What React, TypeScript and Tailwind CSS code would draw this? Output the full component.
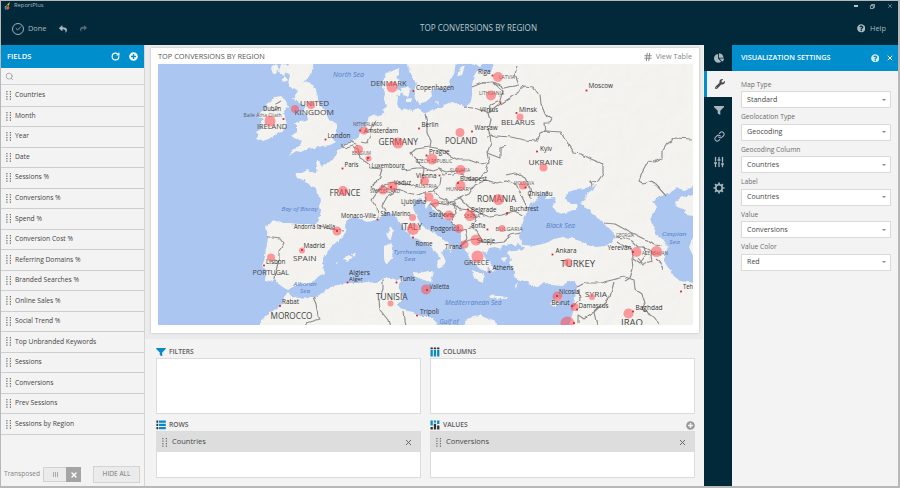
import React from "react";
import { FaReply, FaShare, FaPlusCircle, FaQuestionCircle, FaChartPie, FaWrench } from "react-icons/fa";
import { Check, Hash, Link, RotateCw, Search, SlidersVertical, X } from "lucide-react";

const fields = [
  "Countries", "Month", "Year", "Date", "Sessions %", "Conversions %", "Spend %",
  "Conversion Cost %", "Referring Domains %", "Branded Searches %", "Online Sales %",
  "Social Trend %", "Top Unbranded Keywords", "Sessions", "Conversions", "Prev Sessions",
  "Sessions by Region",
];

const settings: [string, string][] = [
  ["Map Type", "Standard"],
  ["Geolocation Type", "Geocoding"],
  ["Geocoding Column", "Countries"],
  ["Label", "Countries"],
  ["Value", "Conversions"],
  ["Value Color", "Red"],
];

const land = [
  // Continental Europe and western Asia
  "494,63 493,70 488,74 483,70 477,71 474,76 472,85 472,97 470,104 466,107 461,105 452,102 446,104 442,108 435,109 430,111 425,114 421,111 417,108 412,111 408,110 405,108 401,111 398,107 397,103 398,99 396,95 398,90 396,87 400,84 401,80 397,79 399,73 398,68 393,71 386,73 384,78 383,87 385,93 384,100 387,105 383,110 385,113 379,116 373,115 369,117 367,122 366,126 362,128 360,134 358,138 352,141 347,143 343,148 337,150 336,156 332,160 325,164 321,166 319,161 316,161 317,168 316,173 310,172 307,170 302,173 295,173 297,178 304,180 310,185 316,188 317,194 321,200 319,207 321,212 318,223 312,225 307,224 298,224 290,223 281,223 273,220 270,224 265,226 266,232 268,238 266,248 265,257 262,267 267,270 265,280 270,281 275,279 280,285 287,290 293,287 300,284 310,284 315,280 319,276 325,273 323,267 323,258 328,251 333,245 340,239 346,233 345,226 347,220 354,217 360,219 367,222 373,221 380,218 385,212 393,214 399,221 405,230 412,237 418,239 423,242 428,244 432,248 437,253 440,258 437,264 438,269 442,267 446,262 444,257 441,252 446,248 451,252 453,248 447,242 440,238 436,234 430,231 424,227 420,223 416,215 413,208 414,201 420,198 424,203 426,209 429,204 433,209 439,214 447,219 453,224 458,229 461,235 461,243 464,248 467,253 471,261 476,265 480,269 487,272 488,266 496,272 491,264 485,258 482,251 487,253 489,248 495,247 500,249 504,245 511,244 520,247 524,250 513,251 507,252 512,260 509,264 514,270 514,276 520,281 527,281 531,285 538,287 544,282 552,285 561,286 567,282 575,281 577,287 575,298 573,312 569,326 694,326 694,62",
  // Great Britain and Ireland
  "290,62 314,62 311,75 303,83 309,82 316,89 317,98 321,106 325,111 329,120 337,124 337,132 332,138 336,142 330,145 323,146 314,148 307,149 301,152 296,151 289,156 293,150 298,147 303,141 296,139 291,136 297,132 297,126 294,123 301,121 308,120 307,115 302,112 306,106 299,103 293,98 298,91 292,89 288,82 290,76 285,72",
  "275,97 281,96 286,101 288,107 284,111 285,118 287,124 284,131 276,134 271,138 263,141 256,139 259,135 256,132 263,128 260,124 264,119 258,116 262,111 267,109 266,104 271,102",
  "281,63 288,67 284,75 288,80 282,82 284,76 279,72", "271,68 276,64 279,70 273,74",
  // Scandinavia and the Baltic islands
  "405,62 411,73 416,84 414,92 415,99 420,104 427,101 432,96 431,91 437,88 448,88 450,80 454,74 456,62",
  "401,89 408,86 411,91 408,97 403,95", "396,91 401,91 400,96 396,95", "406,99 412,98 411,102 406,102", "461,66 465,66 462,75 458,76", "436,101 439,102 438,105", "470,62 485,62 480,66 473,65",
  // North Africa
  "259,326 264,318 269,313 276,309 281,305 284,297 288,292 292,297 300,298 307,297 316,297 325,291 333,286 347,283 358,283 367,282 377,283 384,278 391,278 397,280 403,278 398,286 401,293 403,298 397,305 403,310 413,312 420,316 429,316 435,321 438,326",
  "464,326 467,319 473,316 480,315 486,318 493,320 499,326",
  // Mediterranean islands
  "391,227 393,230 391,240 388,239 386,233 390,231", "384,246 391,243 393,247 392,258 387,264 384,260", "413,272 420,273 428,271 434,271 431,282 424,280 414,276", "489,295 497,296 508,297 506,299 490,298", "550,304 554,299 563,297 560,302 556,306", "343,259 349,255 352,258 347,262", "336,263 338,262 337,265", "352,254 356,254 354,257", "472,270 479,273 484,273 483,283 478,281 474,277", "486,264 495,270 493,272", "501,258 506,257 505,262", "515,286 518,282 516,289",
];

const water = [
  "523,245 519,237 521,228 524,219 528,210 530,203 536,201 540,195 547,192 546,199 555,198 556,202 552,206 557,212 561,214 568,212 578,208 577,204 571,204 565,198 569,192 576,189 586,188 597,184 593,190 587,193 586,198 580,203 586,208 596,216 604,224 611,230 616,237 610,243 605,246 596,247 587,244 580,241 571,238 563,237 554,239 546,243 535,246",
  "694,187 684,190 677,188 671,192 661,196 653,201 657,207 653,213 650,220 654,227 656,234 663,239 668,247 664,254 664,261 669,269 674,276 680,281 694,283 694,258 689,247 694,235 694,216 686,215 684,209 677,207 675,202 682,197 694,195",
  "512,248 518,244 526,248 520,250",
];

const borders = [
  "341,144 347,148 353,146 358,149 360,158 366,161 370,168 382,169 379,179 371,187 375,192 384,187 390,190 396,188",
  "360,142 367,143 371,138 372,128 376,121", "345,144 351,142 358,145", "367,161 371,156",
  "425,114 427,122 427,133 431,141 430,147 416,149 411,153 416,160 424,168 433,171 439,169 446,172 455,170 465,176 471,180 480,178 486,171 489,162 487,153 491,143 490,136 488,129 491,120 489,113 477,109 465,107",
  "430,147 441,149 449,155 458,160 469,160 480,164 487,163",
  "404,170 416,168 424,168 423,175 421,183 409,186 396,182 388,183 381,187", "439,169 443,175 453,174 465,170",
  "396,188 393,194 387,197 382,206 385,212", "384,187 376,194 372,200 377,207 378,218", "396,188 408,193 418,195 425,192 434,191 440,185 441,177",
  "425,192 426,202", "434,191 440,198 450,202 460,198 469,194 475,185 486,180", "429,205 437,203 447,205 454,204 456,213 448,216 441,213 430,203",
  "456,213 451,222 458,228", "454,204 460,210 470,211 476,217 473,226 465,229 460,231", "460,198 469,207 481,214 490,217 502,215 514,211 523,215",
  "486,180 496,183 506,181 516,184 522,197 527,207", "506,175 515,173 525,178 530,188 531,199",
  "473,226 479,235 483,242 495,243 504,242 511,235 520,233", "461,246 467,241 475,239 483,242", "465,229 467,239 461,245",
  "487,153 500,158 500,148 506,146", "487,137 497,136 511,137 524,140 537,141 540,133 546,131 561,132 564,138 572,149 573,153 581,154 591,159 603,164 603,174 598,181 591,182 592,186",
  "472,87 482,83 493,83 502,91 500,101 491,105 489,113", "482,83 493,82 504,88 519,85 515,75 517,65", "489,113 499,105 510,98 520,91 524,86 533,87 540,96 541,104 545,114 552,118 549,123 544,123 545,132",
  "692,139 676,138 667,144 662,152 662,158 655,162 648,161 642,172 639,181 644,184 652,181 658,187 666,196",
  "604,223 615,224 628,231 640,237 648,241 654,245 662,246", "615,237 624,238 632,241 638,247 644,247 646,255 640,263 633,258 632,249 624,246 617,242", "632,258 633,269 630,278 625,281",
  "577,287 585,283 600,283 612,280 625,277 634,280 635,289 642,294 645,303 642,309 654,317 660,325", "614,282 610,297 594,312 584,319 578,315 578,324", "594,312 597,326", "573,306 580,300 579,290",
  "643,247 650,250 652,261 643,264 638,258", "656,259 661,263 663,270",
  "266,237 273,237 280,238 284,243 279,251 279,259 276,271 275,279", "318,225 330,229 344,231",
  "313,297 316,304 318,316 320,319 307,323 304,327", "383,280 383,290 379,300 380,310 388,320 390,327", "404,312 406,327",
  "273,111 278,108 276,104 281,101",
];

type Bubble = [number, number, number];
const bubbles: Bubble[] = [
  [270, 121, 5.5], [295, 109, 4], [311, 105, 4], [392, 87, 5.5], [498, 77, 5], [491, 95.5, 5],
  [364, 130.5, 4], [460, 132.5, 4.5], [398, 143, 5.5], [358.5, 149.5, 4.5], [368.5, 158.5, 3],
  [432, 159, 5.5], [460.5, 170, 5], [424.5, 181, 4.5], [460.5, 185.5, 5], [392.5, 186.5, 5],
  [383, 190, 4.5], [343, 191, 5], [520, 117, 3.5], [543.5, 167.5, 4], [523, 185.5, 4],
  [429, 197, 4.5], [435, 203, 4], [498.5, 199.5, 5.5], [470, 215.5, 5.5], [449, 215.5, 5],
  [459, 228.5, 4.5], [412.5, 217.5, 3.5], [413, 229, 6], [337, 231, 4.5], [502, 228.5, 3.5],
  [476, 240, 5.5], [464.5, 244.5, 4], [477.5, 256.5, 6], [271, 257.5, 4], [302, 250.5, 3],
  [426, 289.5, 5], [390.5, 303.5, 3], [568, 262.5, 4], [636.5, 252, 5], [656.5, 251.5, 5.5],
  [557.5, 296.5, 5], [592, 297, 3], [574.5, 307, 4], [628.5, 313.5, 5], [567.5, 323.5, 7],
];

const cities: [number, number][] = [
  [283.5, 119], [325.5, 139.5], [342.5, 168.5], [413.5, 91], [492.5, 75.5], [500.5, 103], [516.5, 113],
  [586.5, 90.5], [360, 130.5], [419, 128.5], [472, 131.5], [426.5, 155.5], [439.5, 175.5], [537, 151.5],
  [368, 158], [458, 183], [391, 187], [525.5, 187.5], [377.5, 219.5], [413, 237.5], [507, 213],
  [487.5, 229.5], [489.5, 272], [347.5, 282.5], [396.5, 282.5], [417, 315.5], [280, 306], [264, 265.5],
  [552.5, 254.5], [633, 252], [681, 291.5], [577, 309.5], [572, 306], [633, 311.5], [302, 250], [468, 209.5],
  [557, 296], [427, 290], [574, 323], [337, 231],
];

// text, left, baseline, width, font size, tone
type Tone = "country" | "small" | "city" | "sea";
const labels: [string, number, number, number, number, Tone][] = [
  ["UNITED", 300, 106.3, 29, 8, "country"], ["KINGDOM", 294.5, 115, 39.5, 8, "country"],
  ["IRELAND", 257, 128.5, 30, 7.7, "country"], ["DENMARK", 370.5, 86, 36, 7.7, "country"],
  ["GERMANY", 378.5, 144.5, 39.5, 8.2, "country"], ["POLAND", 445, 143.5, 32.5, 8.2, "country"],
  ["BELARUS", 501, 125, 34, 8, "country"], ["UKRAINE", 528.5, 165, 34.5, 8, "country"],
  ["FRANCE", 329.5, 195.5, 31, 8.2, "country"], ["ROMANIA", 477, 201.5, 39, 8.2, "country"],
  ["ITALY", 401, 229.5, 21, 8.2, "country"], ["SPAIN", 293, 260.5, 23.5, 8, "country"],
  ["PORTUGAL", 252.5, 275, 36.5, 7.2, "country"], ["MOROCCO", 270.5, 319, 42, 8.2, "country"],
  ["TUNISIA", 376, 299.5, 31.5, 8.2, "country"], ["GREECE", 464, 265, 25, 7.2, "country"],
  ["TURKEY", 560.5, 267, 34.5, 8.4, "country"], ["SYRIA", 585, 297, 22, 7.7, "country"],
  ["IRAQ", 621, 326, 22, 8.2, "country"],
  ["LATVIA", 499, 79, 16, 4.8, "small"], ["LITHUANIA", 479, 95, 25, 4.8, "small"],
  ["NETHERLANDS", 353, 125.5, 29, 4.5, "small"], ["BELGIUM", 352, 154.5, 19, 4.5, "small"],
  ["CZECH REPUBLIC", 415.5, 162.5, 37, 4.8, "small"], ["SLOVAKIA", 450, 171.5, 20, 4.6, "small"],
  ["AUSTRIA", 415, 187.5, 22, 5.2, "small"], ["HUNGARY", 446, 190.5, 26, 5.2, "small"],
  ["SWITZERLAND", 370, 193, 30, 4.4, "small"], ["MOLDOVA", 514, 184.5, 20, 4.5, "small"],
  ["CROATIA", 438, 204, 18, 4.2, "small"], ["SERBIA", 464, 218, 16, 4.5, "small"],
  ["BULGARIA", 495.5, 231, 27.5, 5.4, "small"], ["GEORGIA", 616, 237, 18, 4.5, "small"],
  ["AZERBAIJAN", 642, 254.5, 26, 4.5, "small"], ["Baile Átha Cliath", 243.5, 117, 38, 4.8, "small"],
  ["Dublin", 263, 111, 18, 6.6, "city"], ["London", 327.5, 138, 23, 6.7, "city"],
  ["Amsterdam", 364, 133, 34, 6.7, "city"], ["Copenhagen", 416, 89.5, 38, 6.7, "city"],
  ["Riga", 478, 74, 12.5, 6.6, "city"], ["Vilnius", 480, 112, 18, 6.6, "city"],
  ["Minsk", 519, 111.5, 18, 6.6, "city"], ["Moscow", 588.5, 88.3, 24.5, 6.7, "city"],
  ["Berlin", 421.5, 127, 17, 6.6, "city"], ["Warsaw", 474.5, 130, 23, 6.6, "city"],
  ["Prague", 429, 153.8, 20.5, 6.6, "city"], ["Vienna", 416, 178, 20.5, 6.6, "city"],
  ["Kyiv", 540, 150.5, 12, 6.6, "city"], ["Paris", 344.5, 167, 14, 6.6, "city"],
  ["Luxembourg", 371.5, 168, 33, 6.2, "city"], ["Vaduz", 394, 185, 17, 6.2, "city"],
  ["Budapest", 460, 180.5, 27, 6.6, "city"], ["Chișinău", 527.5, 195.5, 25, 6.6, "city"],
  ["Ljubljana", 401, 204, 25, 6.4, "city"], ["Monaco-Ville", 341, 218, 35, 6.4, "city"],
  ["San Marino", 380.5, 216, 30, 6.4, "city"], ["Sarajevo", 429, 217, 24, 6.4, "city"],
  ["Belgrade", 471, 212, 25.5, 6.6, "city"], ["Bucharest", 509.5, 211, 29, 6.6, "city"],
  ["Sofia", 471, 228, 14.5, 6.6, "city"], ["Podgorica", 430.5, 230.5, 29, 6.4, "city"],
  ["Skopje", 477, 243, 18, 6.2, "city"], ["Tirana", 445, 248.5, 17, 6.2, "city"],
  ["Rome", 415.5, 245.5, 17, 6.7, "city"], ["Andorra la Vella", 294, 229, 41, 6.2, "city"],
  ["Madrid", 303.5, 248, 21.5, 6.6, "city"], ["Lisbon", 266, 263.8, 19.5, 6.6, "city"],
  ["Rabat", 282, 303.5, 17, 6.6, "city"], ["Algiers", 349, 274.5, 21, 6.6, "city"],
  ["Alger", 349, 281, 14, 5.2, "city"], ["Tunis", 399.5, 281, 15.5, 6.6, "city"],
  ["Valletta", 429.5, 288.5, 19.5, 6.2, "city"], ["Tripoli", 420, 313.5, 19, 6.7, "city"],
  ["Athens", 492.5, 270, 21, 6.6, "city"], ["Ankara", 555.5, 252.5, 21, 6.6, "city"],
  ["Nicosia", 559, 294, 20, 6.6, "city"], ["Beirut", 551.5, 305, 18, 6.6, "city"],
  ["Damascus", 578.5, 307.5, 30, 6.6, "city"], ["Baghdad", 635.5, 309.5, 27, 6.6, "city"],
  ["Yerevan", 607.5, 250, 24, 6.6, "city"], ["Teh", 683, 289, 10, 6.6, "city"],
  ["North Sea", 333, 77, 31, 6.5, "sea"], ["Bay of Biscay", 281.5, 210.5, 36, 6, "sea"],
  ["Alboran", 293.5, 285.8, 23, 5.8, "sea"], ["Sea", 300, 293.3, 10, 5.6, "sea"],
  ["Tyrrhenian", 393.5, 253.6, 32.5, 6, "sea"], ["Sea", 404, 261.4, 11.5, 5.8, "sea"],
  ["Mediterranean Sea", 445, 304.5, 56.5, 6.5, "sea"], ["Gulf of", 439.5, 323.5, 19, 6.2, "sea"],
  ["Black Sea", 546, 227.5, 29, 6.5, "sea"], ["Caspian", 662, 235.8, 24.5, 6, "sea"],
  ["Sea", 669, 243.6, 11, 5.8, "sea"],
];

const toneClass: Record<Tone, string> = {
  country: "fill-[#454545] font-medium",
  small: "fill-[#5c5c5c] font-medium",
  city: "fill-[#303030]",
  sea: "fill-[#5580c4] italic",
};

function RegionMap() {
  return (
    <svg viewBox="158 64 535 261" className="block h-[261px] w-[535px] font-['Open_Sans','Noto_Sans',sans-serif]" preserveAspectRatio="none">
      <defs>
        <filter id="relief" x="0" y="0" width="1" height="1">
          <feTurbulence type="fractalNoise" baseFrequency="0.07" numOctaves="3" seed="6" result="n" />
          <feDiffuseLighting in="n" surfaceScale="1.1" lightingColor="#ffffff" result="l">
            <feDistantLight azimuth="225" elevation="62" />
          </feDiffuseLighting>
          <feComposite in="l" in2="SourceAlpha" operator="in" />
        </filter>
        <filter id="coast" x="-5%" y="-5%" width="110%" height="110%">
          <feTurbulence type="fractalNoise" baseFrequency="0.25" numOctaves="2" seed="3" />
          <feDisplacementMap in="SourceGraphic" scale="3.2" xChannelSelector="R" yChannelSelector="G" />
        </filter>
        <filter id="frontier" filterUnits="userSpaceOnUse" x="150" y="56" width="551" height="277">
          <feTurbulence type="fractalNoise" baseFrequency="0.16" numOctaves="1" seed="8" />
          <feDisplacementMap in="SourceGraphic" scale="4" xChannelSelector="R" yChannelSelector="G" />
        </filter>
      </defs>
      <rect x="158" y="64" width="535" height="261" fill="#abc6f1" />
      <g filter="url(#coast)">
        {land.map((p) => <polygon key={p} points={p} fill="#f4f3ef" />)}
      </g>
      <g filter="url(#coast)" opacity="0.1">
        {land.map((p) => <polygon key={p} points={p} filter="url(#relief)" />)}
      </g>
      <g filter="url(#coast)">
        {water.map((p) => <polygon key={p} points={p} fill="#abc6f1" />)}
      </g>
      <g filter="url(#frontier)">
        {borders.map((p) => <polyline key={p} points={p} fill="none" stroke="#8d8d8d" strokeWidth="1.15" strokeLinejoin="round" />)}
      </g>
      {labels.map(([t, x, y, w, s, tone], i) => (
        <text key={i} x={x} y={y} textLength={w} lengthAdjust="spacingAndGlyphs" fontSize={s} className={toneClass[tone]}>{t}</text>
      ))}
      {bubbles.map(([x, y, r], i) => <circle key={i} cx={x} cy={y} r={r} fill="#ff5058" fillOpacity="0.56" />)}
      {cities.map(([x, y], i) => <rect key={i} x={x - 0.9} y={y - 0.9} width="1.8" height="1.8" fill="#cf2a2a" />)}
    </svg>
  );
}

function Grip() {
  return (
    <svg viewBox="0 0 6 9" className="h-[9px] w-[6px] shrink-0" fill="#6d6d6d">
      {[0, 2.5, 5, 7.5].map((y) => (
        <React.Fragment key={y}>
          <rect x="0.3" y={y} width="1.2" height="1.3" />
          <rect x="3.8" y={y} width="1.2" height="1.3" />
        </React.Fragment>
      ))}
    </svg>
  );
}

function Funnel({ className }: { className: string }) {
  return (
    <svg viewBox="0 0 10 9" className={className} fill="currentColor">
      <path d="M0 0h10v1L6.3 4.8V9L3.7 7.5V4.8L0 1z" />
    </svg>
  );
}

function ZoneIcon({ kind }: { kind: string }) {
  if (kind === "FILTERS") return <Funnel className="h-[8.5px] w-[10px] text-[#078bc7]" />;
  if (kind === "COLUMNS")
    return (
      <svg viewBox="0 0 10 10" className="h-[10px] w-[10px]">
        <path d="M.5 .5h2.3v1.8H.5zM3.8 .5h2.3v1.8H3.8zM7.1 .5h2.3v1.8H7.1z" fill="#333" />
        <path d="M.5 3h2.3v6.5H.5zM3.8 3h2.3v6.5H3.8zM7.1 3h2.3v6.5H7.1z" fill="#078bc7" />
      </svg>
    );
  if (kind === "ROWS")
    return (
      <svg viewBox="0 0 10 10" className="h-[10px] w-[10px]">
        <path d="M.4 .5h1.8v2.2H.4zM.4 3.8h1.8V6H.4zM.4 7.1h1.8v2.2H.4z" fill="#333" />
        <path d="M3 .5h6.8v2.2H3zM3 3.8h6.8V6H3zM3 7.1h6.8v2.2H3z" fill="#078bc7" />
      </svg>
    );
  return (
    <svg viewBox="0 0 10 10" className="h-[10px] w-[10px]">
      <path d="M.5 .5h2.3v5H.5zM3.8 .5h2.3v2H3.8zM7.1 .5h2.3v3.5H7.1z" fill="#078bc7" />
      <path d="M.5 7h2.3v2.5H.5zM3.8 3.8h2.3v5.7H3.8zM7.1 5.5h2.3v4H7.1z" fill="#333" />
    </svg>
  );
}

function Zone({ title, item, add }: { title: string; item?: string; add?: boolean }) {
  return (
    <section className="min-w-0 flex-1">
      <div className="flex h-[13px] items-center gap-[3px] pt-px text-[6.7px] font-semibold text-[#5a5a5a]">
        <ZoneIcon kind={title} />
        <span>{title}</span>
        {add && <FaPlusCircle className="ml-auto h-[9px] w-[9px] text-[#999999]" />}
      </div>
      <div className={item ? "h-[47px] border border-[#dcdcdc] bg-white" : "h-[56px] border border-[#dcdcdc] bg-white"}>
        {item && (
          <div className="flex h-[20px] items-center gap-[4px] bg-[#dddddd] pl-[5px] pr-[7px] text-[7.5px] text-[#484848]">
            <Grip />
            <span>{item}</span>
            <X className="ml-auto h-[9px] w-[9px] text-[#666666]" strokeWidth={2.6} />
          </div>
        )}
      </div>
    </section>
  );
}

function Gear() {
  return (
    <svg viewBox="0 0 24 24" className="h-[12px] w-[12px]" fill="none" stroke="currentColor">
      <circle cx="12" cy="12" r="6.4" strokeWidth="3.2" />
      <path d="M12 1v4M12 19v4M1 12h4M19 12h4M4.2 4.2l2.9 2.9M16.9 16.9l2.9 2.9M4.2 19.8l2.9-2.9M16.9 7.1l2.9-2.9" strokeWidth="3.4" />
    </svg>
  );
}

export default function App() {
  return (
    <div className="flex h-[488px] w-[900px] flex-col overflow-hidden border border-b-2 border-r-2 border-[#b8b8b8] bg-[#f3f3f3] font-['Open_Sans','Noto_Sans',sans-serif] text-[7px] leading-none text-[#505050]">
      <header className="flex h-[44px] shrink-0 flex-col bg-[#02293a] text-[#a9b8bf]">
        <div className="flex h-[10px] items-center pl-[3px] pr-[5px]">
          <svg viewBox="0 0 8 9" className="h-[8px] w-[7px]">
            <path d="M3.2 3.3L6.8 0 5.5 4.3z" fill="#f5cb24" />
            <path d="M3.3 3 0.6 5.5 3 6z" fill="#66bc45" />
            <path d="M.5 5.8C.6 8 1.5 8.5 3 8.8L3.3 5.5z" fill="#1c9ada" />
            <path d="M3.4 5l2.2-.6C7 7 5.8 8.6 3.3 8.8z" fill="#ef5138" />
          </svg>
          <span className="ml-[3px] text-[5.8px]">ReportPlus</span>
          <div className="ml-auto flex items-center gap-[12px]">
            <span className="h-[1.5px] w-[4px] bg-[#b6c3c9]" />
            <svg viewBox="0 0 6 6" className="h-[5px] w-[5px]" fill="none" stroke="#b6c3c9" strokeWidth="1">
              <path d="M.5 2h3.5v3.5H.5zM2 2V.5h3.5V4H4" />
            </svg>
            <X className="h-[6px] w-[6px]" strokeWidth={2.5} />
          </div>
        </div>
        <div className="grid h-[34px] grid-cols-3 items-center pt-px">
          <div className="flex items-center pl-[11px]">
            <span className="flex h-[12px] w-[12px] items-center justify-center rounded-full border border-[#9eafb7]">
              <Check className="h-[7px] w-[7px]" strokeWidth={3} />
            </span>
            <span className="ml-[4px] text-[7.4px]">Done</span>
            <FaReply className="ml-[12px] h-[8px] w-[8px]" />
            <FaShare className="ml-[13px] h-[7px] w-[7px] text-[#4f6874]" />
          </div>
          <h1 className="translate-x-[29px] whitespace-nowrap text-center text-[8.1px] text-[#bcc7cc]">TOP CONVERSIONS BY REGION</h1>
          <div className="flex items-center justify-end gap-[5px] pr-[12px] text-[7.4px]">
            <FaQuestionCircle className="h-[8.5px] w-[8.5px]" />
            <span>Help</span>
          </div>
        </div>
      </header>

      <div className="flex min-h-0 flex-1">
        <aside className="flex w-[144px] shrink-0 flex-col border-r border-[#d5d5d5]">
          <div className="flex h-[23px] shrink-0 items-center bg-[#008ecd] pl-[6px] pr-[6px] text-white">
            <span className="text-[7.6px] font-semibold">FIELDS</span>
            <RotateCw className="ml-auto h-[9px] w-[9px]" strokeWidth={3} />
            <FaPlusCircle className="ml-[9px] h-[9px] w-[9px]" />
          </div>
          <div className="flex h-[17px] shrink-0 items-center border-b border-[#d3d3d3] pl-[4px]">
            <Search className="h-[9px] w-[9px] text-[#999999]" strokeWidth={2} />
          </div>
          <ul className="pt-px">
            {fields.map((f) => (
              <li key={f} className="flex h-[20.53px] items-center gap-[3px] border-b border-[#cecece] pl-[5px] text-[6.7px] text-[#444444]">
                <Grip />
                <span>{f}</span>
              </li>
            ))}
          </ul>
          <div className="mb-[3px] mt-auto flex items-center pl-[3px] pr-[4px]">
            <span className="text-[6.6px] text-[#858585]">Transposed</span>
            <div className="ml-[3px] flex h-[15px] w-[38px] border border-[#d2d2d2] bg-[#ebebeb]">
              <span className="flex flex-1 items-center justify-center gap-[1px]">
                <i className="h-[5px] w-px bg-[#aaaaaa]" /><i className="h-[5px] w-px bg-[#aaaaaa]" /><i className="h-[5px] w-px bg-[#aaaaaa]" />
              </span>
              <span className="-my-px -mr-px flex w-[15px] items-center justify-center bg-[#a4a4a4] text-white">
                <X className="h-[8px] w-[8px]" strokeWidth={4} />
              </span>
            </div>
            <button className="ml-auto h-[17px] w-[47px] border border-[#d4d4d4] bg-[#ebebeb] text-[6.6px] text-[#777777]">HIDE ALL</button>
          </div>
        </aside>

        <main className="flex w-[558px] shrink-0 flex-col">
          <div className="h-[294px] shrink-0 bg-[#ebebeb] pl-[6px] pt-[3px]">
            <div className="h-[285px] w-[548px] bg-white pl-[7px] shadow-[0_0_2px_rgba(0,0,0,0.25)]">
              <div className="flex h-[16px] items-center pr-[7px] pt-[2px] text-[7.4px] text-[#555555]">
                <span>TOP CONVERSIONS BY REGION</span>
                <Hash className="ml-auto h-[10px] w-[10px] text-[#777777]" strokeWidth={2} />
                <span className="ml-[3px] text-[7.3px] text-[#858585]">View Table</span>
              </div>
              <RegionMap />
            </div>
          </div>
          <div className="flex flex-col gap-[4px] pl-[11px] pr-[8px] pt-[6px]">
            <div className="flex gap-[9px]">
              <Zone title="FILTERS" />
              <Zone title="COLUMNS" />
            </div>
            <div className="flex gap-[9px]">
              <Zone title="ROWS" item="Countries" />
              <Zone title="VALUES" item="Conversions" add />
            </div>
          </div>
        </main>

        <nav className="ml-px flex w-[28px] shrink-0 flex-col bg-[#02293a] text-[#a9b7be]">
          <span className="flex h-[26px] items-center justify-center pl-[2px]"><FaChartPie className="h-[10px] w-[10px]" /></span>
          <span className="flex h-[26px] items-center justify-center border-l-[3px] border-[#008ecd] bg-[#f3f3f3] text-[#4c4c4c]"><FaWrench className="h-[10px] w-[10px]" /></span>
          <span className="flex h-[26px] items-center justify-center pl-[2px]"><Funnel className="h-[9px] w-[10px]" /></span>
          <span className="flex h-[26px] items-center justify-center pl-[2px]"><Link className="h-[11px] w-[11px]" strokeWidth={2.2} /></span>
          <span className="flex h-[26px] items-center justify-center pl-[2px]"><SlidersVertical className="h-[12px] w-[12px]" strokeWidth={2.6} /></span>
          <span className="flex h-[26px] items-center justify-center pl-[2px]"><Gear /></span>
        </nav>

        <aside className="min-w-0 flex-1">
          <div className="flex h-[26px] items-center bg-[#008ecd] pl-[9px] pr-[4px] text-white">
            <span className="text-[7.3px] font-semibold">VISUALIZATION SETTINGS</span>
            <FaQuestionCircle className="ml-auto h-[8.5px] w-[8.5px] text-[#d6edf7]" />
            <X className="ml-[7px] h-[8px] w-[8px]" strokeWidth={3} />
          </div>
          <div className="pl-[9px] pt-[8px]">
            {settings.map(([label, value]) => (
              <div key={label} className="h-[32.5px]">
                <div className="flex h-[12px] items-center text-[6.7px] text-[#6c6c6c]">{label}</div>
                <div className="flex h-[17px] w-[150px] items-center justify-between border border-[#dadada] bg-white pl-[5px] pr-[4px] text-[7.1px] text-[#484848]">
                  <span>{value}</span>
                  <i className="h-0 w-0 border-x-[2px] border-t-[2px] border-x-transparent border-t-[#888888]" />
                </div>
              </div>
            ))}
          </div>
        </aside>
      </div>
    </div>
  );
}
